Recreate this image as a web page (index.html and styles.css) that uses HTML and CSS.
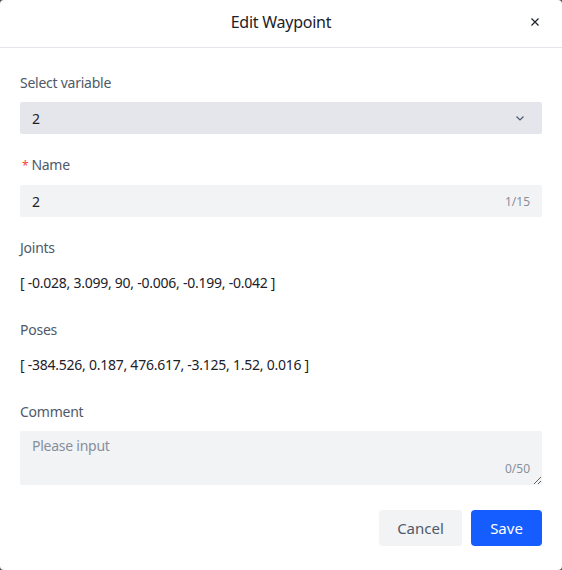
FILE: index.html
```html
<!DOCTYPE html>
<html lang="en">

    <head>
        <meta charset="UTF-8">
        <meta name="viewport" content="width=device-width, initial-scale=1.0">
        <title>Edit Waypoint</title>
        <link rel="stylesheet" href="styles.css">
    </head>

    <body>
        <div class="modal">
            <div class="modal-header">
                <h2 class="modal-title">Edit Waypoint</h2>
                <button class="close-btn" aria-label="Close">
                    <svg width="12" height="12" viewBox="0 0 12 12">
                        <path d="M2.5 2.5 L9.5 9.5 M9.5 2.5 L2.5 9.5" stroke="#1d2129" stroke-width="1.2" fill="none" />
                    </svg>
                </button>
            </div>

            <div class="modal-body">
                <div class="form-item">
                    <label class="form-label">Select variable</label>
                    <div class="select">
                        <span>2</span>
                        <svg class="arrow" width="12" height="12" viewBox="0 0 12 12">
                            <path d="M2.5 4.5 L6 8 L9.5 4.5" stroke="#4e5969" stroke-width="1.2" fill="none" />
                        </svg>
                    </div>
                </div>

                <div class="form-item">
                    <label class="form-label"><span class="required">*</span>Name</label>
                    <div class="input">
                        <span>2</span>
                        <span class="counter">1/15</span>
                    </div>
                </div>

                <div class="form-item">
                    <label class="form-label">Joints</label>
                    <p class="form-value">[ -0.028, 3.099, 90, -0.006, -0.199, -0.042 ]</p>
                </div>

                <div class="form-item">
                    <label class="form-label">Poses</label>
                    <p class="form-value">[ -384.526, 0.187, 476.617, -3.125, 1.52, 0.016 ]</p>
                </div>

                <div class="form-item">
                    <label class="form-label">Comment</label>
                    <div class="textarea-wrap">
                        <textarea class="textarea" placeholder="Please input"></textarea>
                        <span class="counter textarea-counter">0/50</span>
                    </div>
                </div>
            </div>

            <div class="modal-footer">
                <button class="btn btn-secondary">Cancel</button>
                <button class="btn btn-primary">Save</button>
            </div>
        </div>
    </body>

</html>
```

FILE: styles.css
```css
* {
    margin: 0;
    padding: 0;
    box-sizing: border-box;
    font-family: "Noto Sans", "Open Sans", sans-serif;
}

body {
    background-color: #4e5058;
    width: 562px;
    height: 570px;
    overflow: hidden;
    letter-spacing: -0.25px;
}

.modal {
    width: 562px;
    height: 570px;
    background-color: #fff;
    border-radius: 4px;
    display: flex;
    flex-direction: column;
}

.modal-header {
    position: relative;
    height: 48px;
    border-bottom: 1px solid #e5e6eb;
    display: flex;
    align-items: center;
    justify-content: center;
    padding-bottom: 4px;
}

.modal-title {
    font-size: 16px;
    font-weight: 400;
    color: #1d2129;
    line-height: 24px;
}

.close-btn {
    position: absolute;
    right: 21px;
    top: 16px;
    width: 12px;
    height: 12px;
    border: none;
    background: none;
    display: flex;
    cursor: pointer;
}

.modal-body {
    padding: 24px 20px 0;
}

.form-item {
    margin-bottom: 20px;
}

.form-label {
    display: block;
    font-size: 14px;
    line-height: 22px;
    color: #4e5969;
    margin-bottom: 8px;
}

.required {
    color: #f53f3f;
    margin-right: 3px;
    font-size: 12px;
    margin-left: 2px;
}

.select,
.input {
    height: 32px;
    border-radius: 2px;
    display: flex;
    align-items: center;
    justify-content: space-between;
    padding: 0 12px;
    font-size: 14px;
    color: #1d2129;
}

.select {
    background-color: #e5e6eb;
}

.input {
    background-color: #f2f3f5;
}

.arrow {
    margin-right: 4px;
}

.counter {
    font-size: 12px;
    color: #86909c;
    letter-spacing: 0;
}

.form-value {
    font-size: 14px;
    line-height: 32px;
    color: #1d2129;
}

.textarea-wrap {
    position: relative;
    height: 54px;
}

.textarea {
    width: 100%;
    height: 54px;
    background-color: #f2f3f5;
    border: none;
    border-radius: 2px;
    padding: 4px 12px;
    font-size: 14px;
    line-height: 22px;
    letter-spacing: -0.25px;
    color: #1d2129;
    resize: vertical;
    outline: none;
}

.textarea::placeholder {
    color: #86909c;
}

.textarea-counter {
    position: absolute;
    right: 12px;
    bottom: 8px;
}

.modal-footer {
    margin-top: auto;
    padding: 0 20px 24px;
    display: flex;
    justify-content: flex-end;
    gap: 9px;
}

.btn {
    height: 36px;
    border: none;
    border-radius: 4px;
    font-size: 15px;
    letter-spacing: 0;
    cursor: pointer;
}

.btn-secondary {
    width: 83px;
    background-color: #f2f3f5;
    color: #4e5969;
}

.btn-primary {
    width: 71px;
    background-color: #165dff;
    color: #fff;
}
```
